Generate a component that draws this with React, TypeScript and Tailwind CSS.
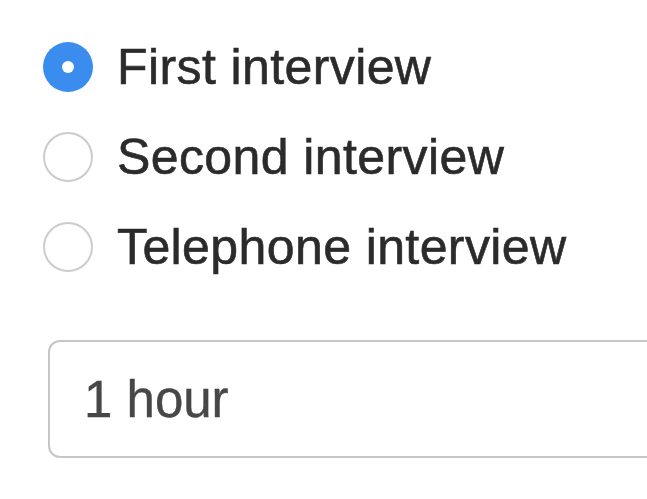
const options = ["First interview", "Second interview", "Telephone interview"];

export default function App() {
  return (
    <div className="w-[647px] h-[499px] overflow-hidden bg-white font-['Liberation_Sans',Arial,sans-serif]">
      <div className="pt-[22px] pl-[43px]">
        {options.map((label, idx) => (
          <div key={label} className="flex items-center h-[90px]">
            {idx === 0 ? (
              <span className="w-[50px] h-[50px] rounded-full bg-[#3a8cef] flex items-center justify-center shrink-0">
                <span className="w-[12px] h-[12px] rounded-full bg-white" />
              </span>
            ) : (
              <span className="w-[50px] h-[50px] rounded-full border-2 border-[#cccccc] bg-white shrink-0" />
            )}
            <span className="ml-[24px] text-[50px] leading-none tracking-[0.4px] text-[#2b2b2b] whitespace-nowrap [-webkit-text-stroke:0.6px_#2b2b2b]">
              {label}
            </span>
          </div>
        ))}
      </div>
      <div className="mt-[48px] ml-[48px] w-[700px] h-[118px] rounded-[12px] border-2 border-[#c6c6c6] flex items-center pl-[34px]">
        <span className="text-[51px] leading-none text-[#474747] [-webkit-text-stroke:0.4px_#474747]">1 hour</span>
      </div>
    </div>
  );
}
